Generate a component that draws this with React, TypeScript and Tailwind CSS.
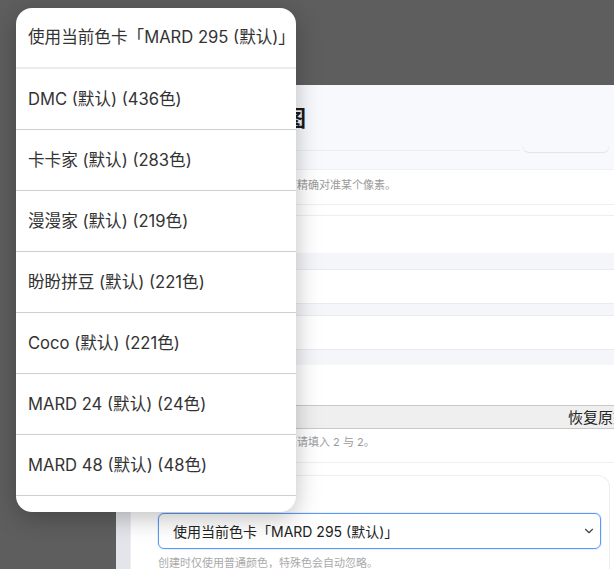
import { ChevronDown } from 'lucide-react';

const palettes = [
  '使用当前色卡「MARD 295 (默认)」',
  'DMC (默认) (436色)',
  '卡卡家 (默认) (283色)',
  '漫漫家 (默认) (219色)',
  '盼盼拼豆 (默认) (221色)',
  'Coco (默认) (221色)',
  'MARD 24 (默认) (24色)',
  'MARD 48 (默认) (48色)',
  'MARD 72 (默认) (72色)',
];

const font = { fontFamily: 'Inter, "Noto Sans CJK SC", sans-serif' };

export default function App() {
  return (
    <div
      className="relative h-[569px] w-[614px] overflow-hidden bg-[#5e5e5e] pl-[116px] pt-[85px]"
      style={font}
    >
      {/* Modal sheet behind the native picker */}
      <div className="flex w-[510px] flex-col bg-white">
        {/* Header */}
        <div className="flex h-[85px] border-b border-[#eef0f4] bg-[#f8f9fc]">
          <div className="flex w-[404px] flex-col">
            <h2 className="mt-[18px] pl-[80px] text-[22px] leading-[30px] font-bold text-[#1a1a1a]">
              创建拼豆图
            </h2>
            <div className="mt-[17px] h-px bg-[#eceef3]" />
          </div>
          <button className="mb-[17px] ml-[3px] h-[30px] w-[86px] self-end rounded-md bg-[#f8f9fc] shadow-[0_1px_1px_rgba(0,0,0,0.09)]" />
        </div>

        {/* Body */}
        <p className="mt-[7px] pl-[137px] text-[11px] leading-[16px] text-[#9a9a9a]">
          放大后可精确对准某个像素。
        </p>
        <div className="mt-[11px] h-[12px] border-y border-[#eceef2]" />
        <div className="h-[37px]" />
        <div className="h-[17px] border-b border-[#e9ebf0] bg-[#f5f6fa]" />
        <div className="h-[33px]" />
        <div className="h-[13px] border-y border-[#e9ebf0] bg-[#f5f6fa]" />
        <div className="h-[33px]" />
        <div className="h-[16px] border-t border-[#e9ebf0] bg-[#f5f6fa]" />
        <div className="h-[40px]" />
        <div className="flex h-[24px] items-center overflow-hidden border-y border-[#c9c9c9] bg-[#efefef] pl-[452px] text-[15px] leading-none whitespace-nowrap text-[#222]">
          恢复原始尺寸
        </div>
        <p className="mt-[5px] pl-[159px] text-[11px] leading-[16px] text-[#9a9a9a]">
          宽高请填入 2 与 2。
        </p>
        <div className="mt-[12px] h-px bg-[#eef0f3]" />

        {/* Palette card */}
        <div className="flex border-l-[14px] border-[#e3e5ea] pt-[12px]">
          <div className="flex w-[480px] flex-col rounded-t-xl border border-b-0 border-[#eceef2] bg-white pt-[14px] pr-[8px] pl-[27px]">
            <label className="text-[13px] leading-[18px] text-[#555]">色卡</label>
            <div className="mt-[5px] flex h-[36px] items-center justify-between rounded-md border border-[#5a9af5] bg-white pr-[4px] pl-[14px] shadow-[0_0_0_1px_rgba(90,154,245,0.15)]">
              <span className="text-[14px] text-[#222]">使用当前色卡「MARD 295 (默认)」</span>
              <ChevronDown className="h-[14px] w-[14px] text-[#444]" strokeWidth={2} />
            </div>
            <p className="mt-[6px] text-[11px] leading-[16px] text-[#aaa]">
              创建时仅使用普通颜色，特殊色会自动忽略。
            </p>
          </div>
        </div>
      </div>

      {/* Native select popup */}
      <div className="absolute top-[8px] left-[16px] h-[504px] w-[280px] overflow-hidden rounded-[16px] bg-white shadow-[0_6px_24px_rgba(0,0,0,0.25)]">
        <ul className="flex flex-col">
          {palettes.map((p, i) => (
            <li
              key={p}
              className={
                i === 0
                  ? 'flex h-[61px] shrink-0 items-center border-b-[2px] border-[#ececec] pl-[12px] text-[16.6px] whitespace-nowrap text-[#333]'
                  : 'flex h-[61px] shrink-0 items-center border-b border-[#cfcfcf] pl-[12px] text-[16.6px] whitespace-nowrap text-[#333]'
              }
            >
              {p}
            </li>
          ))}
        </ul>
      </div>
    </div>
  );
}
